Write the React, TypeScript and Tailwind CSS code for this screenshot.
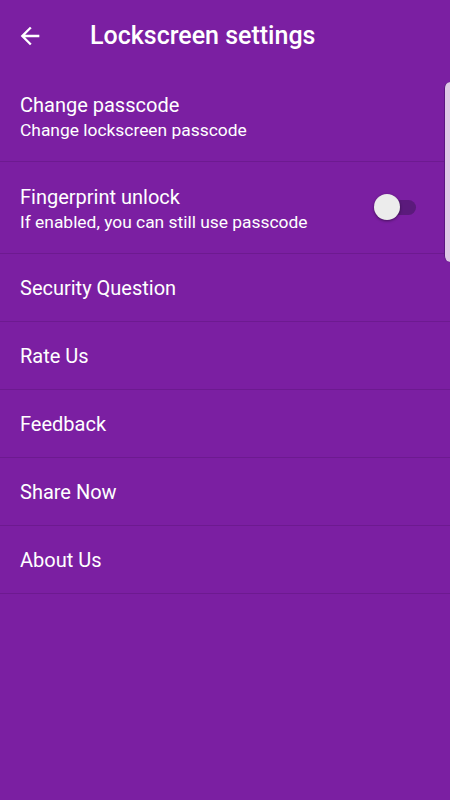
import React from "react";

function Row({ title, subtitle, toggle }: { title: string; subtitle?: string; toggle?: boolean }) {
  return (
    <div
      className={`flex items-center justify-between border-b border-[#6d1a90] pl-5 pr-[34px] pt-[2px] ${
        subtitle ? "h-[92px]" : "h-[68px]"
      }`}
    >
      <div className="flex flex-col">
        <div className="text-[20px] leading-[25px] text-white">{title}</div>
        {subtitle && <div className="text-[17.4px] leading-[22px] text-white mt-[1px]">{subtitle}</div>}
      </div>
      {toggle && (
        <div className="relative mb-[4px] h-[26px] w-[42px]">
          <div className="absolute right-0 top-[6px] h-[15px] w-[40px] rounded-full bg-[#5b1a7c]" />
          <div className="absolute left-0 top-0 h-[26px] w-[26px] rounded-full bg-[#ececec] shadow-[0_1px_3px_rgba(0,0,0,0.45)]" />
        </div>
      )}
    </div>
  );
}

export default function App() {
  return (
    <div
      className="relative h-[800px] w-[450px] overflow-hidden bg-[#7b1fa2]"
      style={{ fontFamily: "Roboto, 'Noto Sans', sans-serif" }}
    >
      <div className="flex h-[70px] items-center pt-[2px]">
        <div className="flex w-[60px] justify-center">
          <svg width="28" height="28" viewBox="0 0 24 24" fill="white">
            <path d="M20 11H7.83l5.59-5.59L12 4l-8 8 8 8 1.41-1.41L7.83 13H20v-2z" />
          </svg>
        </div>
        <div className="ml-[30px] text-[25px] font-medium text-white">Lockscreen settings</div>
      </div>
      <Row title="Change passcode" subtitle="Change lockscreen passcode" />
      <Row title="Fingerprint unlock" subtitle="If enabled, you can still use passcode" toggle />
      <Row title="Security Question" />
      <Row title="Rate Us" />
      <Row title="Feedback" />
      <Row title="Share Now" />
      <Row title="About Us" />
      <div className="absolute right-0 top-[82px] h-[180px] w-[6px] rounded-l-[10px] border-l border-[#5c1580] bg-[#dfc8e6]" />
    </div>
  );
}
